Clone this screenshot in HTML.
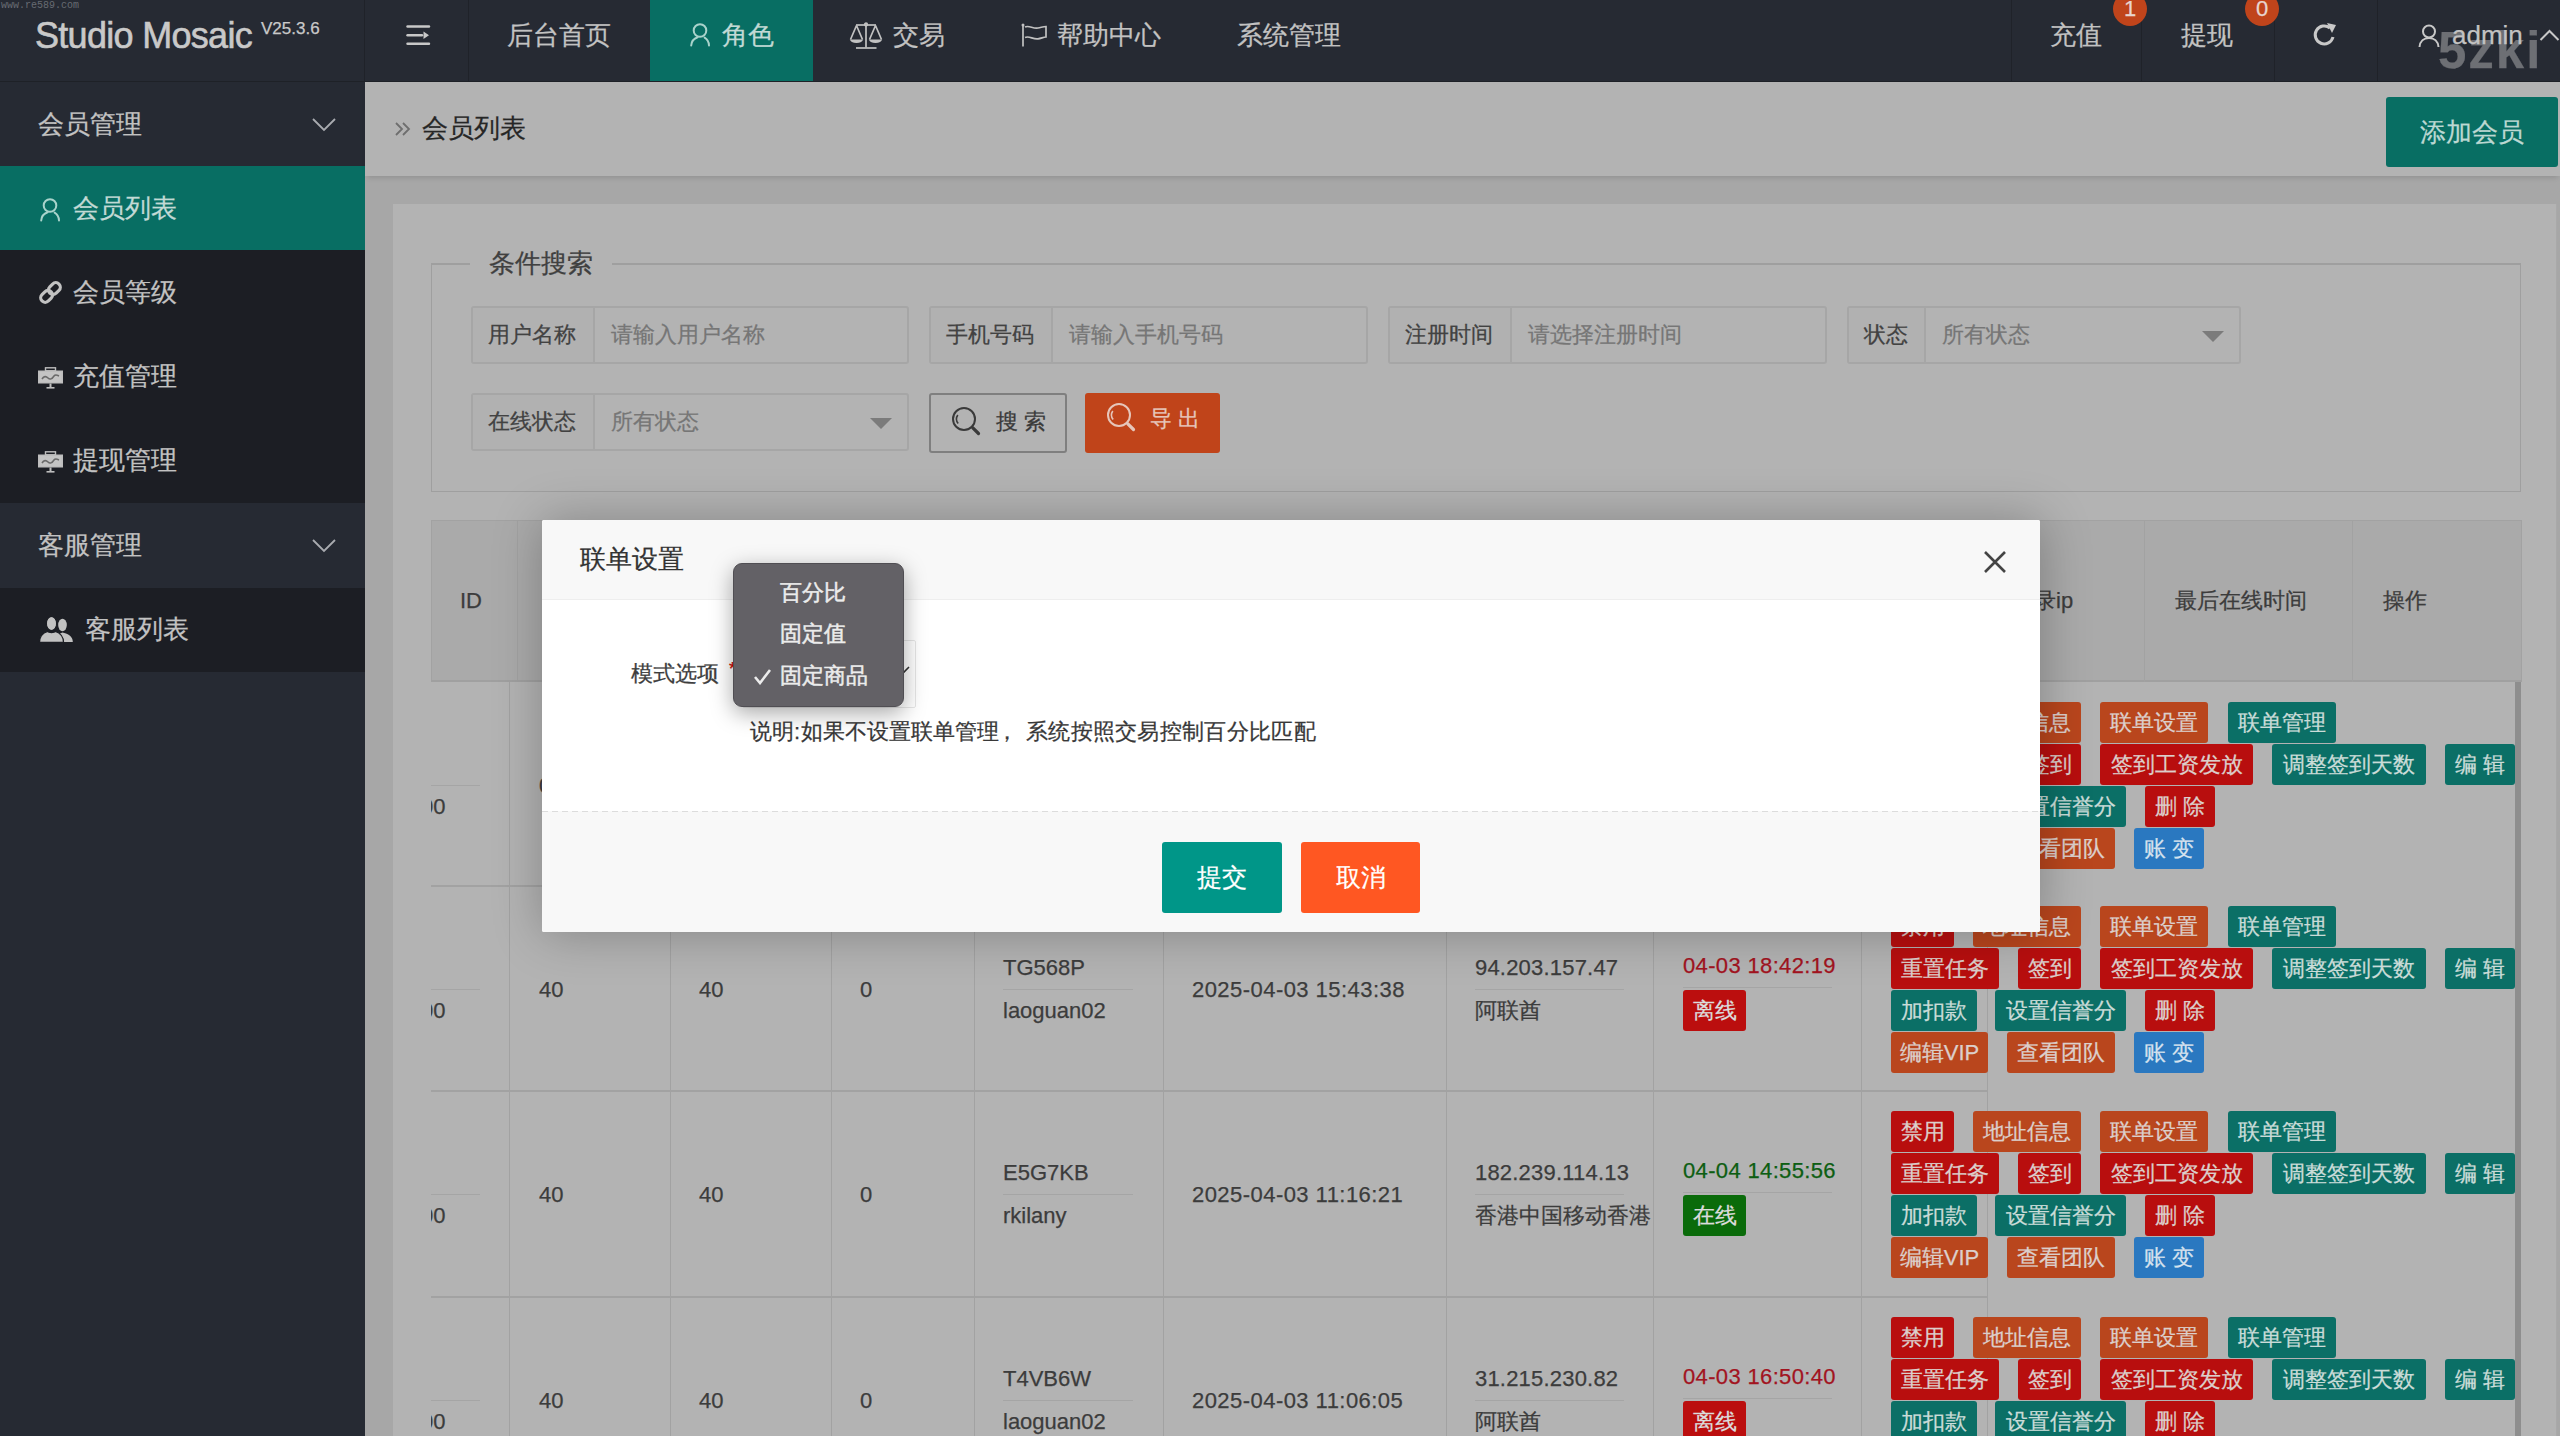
<!DOCTYPE html>
<html><head><meta charset="utf-8">
<style>
*{margin:0;padding:0;box-sizing:border-box}
html,body{width:2560px;height:1436px;overflow:hidden;background:#a7a7a7;font-family:"Liberation Sans",sans-serif;color:#242424}
.a{position:absolute}
.t{position:absolute;white-space:nowrap;line-height:1;-webkit-text-stroke:.25px currentColor}
.btn,.ig .lb,.ig .ph,.badge{-webkit-text-stroke:.25px currentColor}
#hdr{left:0;top:0;width:2560px;height:82px;background:#262a33}
#side{left:0;top:82px;width:365px;height:1354px;background:#262a33}
.nav{color:#c2c2c2;font-size:26px}
.vsep{position:absolute;top:0;width:1px;height:82px;background:#1f2229}
.badge{position:absolute;width:34px;height:34px;border-radius:50%;background:#c0441b;color:#e8d5cf;font-size:22px;text-align:center;line-height:34px}
.sb{color:#c2c2c2;font-size:26px}
.grp{position:absolute;left:0;width:365px;height:84px;background:#262a33}
.sub{position:absolute;left:0;width:365px;background:#1c1e24}
.ig{position:absolute;height:58px;border:2px solid #a6a6a6;border-radius:3px;background:#b3b3b3}
.ig .lb{position:absolute;left:0;top:0;bottom:0;border-right:2px solid #a6a6a6;background:#b1b1b1;font-size:22px;color:#424242;line-height:54px;padding-left:15px}
.ig .ph{position:absolute;top:0;bottom:0;font-size:22px;color:#767676;line-height:54px}
.tri{position:absolute;width:0;height:0;border-left:11px solid transparent;border-right:11px solid transparent;border-top:11px solid #7b7b7b}
.vl{position:absolute;width:1px;background:#a2a2a2}
.hl{position:absolute;height:2px;background:#a2a2a2}
.cell{font-size:22px;color:#3c3c3c}
.btn{position:absolute;height:41px;border-radius:3px;color:#dccfcb;font-size:22px;line-height:41px;text-align:center;white-space:nowrap}
.r{background:#b80e0e}
.o{background:#b9461d}
.g{background:#0b6f66;color:#cadcd8}
.bl{background:#2a78c0;color:#d6e2ee}
</style></head><body>

<!-- HEADER -->
<div id="hdr" class="a">
  <div class="t" style="left:1px;top:1px;font-family:'Liberation Mono',monospace;font-size:10px;color:#666a72;-webkit-text-stroke:0">www.re589.com</div>
  <div class="t" style="left:35px;top:18px;font-size:36px;color:#c9c9c9;letter-spacing:-.7px;-webkit-text-stroke:.6px #c9c9c9">Studio Mosaic</div>
  <div class="t" style="left:261px;top:20px;font-size:17px;color:#c9c9c9">V25.3.6</div>
  <div class="vsep" style="left:364px"></div>
  <div class="vsep" style="left:468px"></div>
  <!-- menu icon -->
  <svg class="a" style="left:405px;top:25px" width="26" height="22" viewBox="0 0 26 22"><g stroke="#c8c8c8" stroke-width="2.4" stroke-linecap="round"><path d="M2.5 1.5 H24"/><path d="M2.5 10.2 H17"/><path d="M2.5 18.8 H24"/></g><path d="M18.5 6.5 L24 10.2 L18.5 14Z" fill="#c8c8c8"/></svg>
  <div class="t nav" style="left:507px;top:22px">后台首页</div>
  <div class="a" style="left:650px;top:0;width:163px;height:82px;background:#086e63"></div>
  <svg class="a" style="left:689px;top:23px" width="22" height="24" viewBox="0 0 22 24"><g fill="none" stroke="#a9d3cb" stroke-width="2" stroke-linecap="round"><circle cx="11" cy="7.5" r="6.3"/><path d="M2.2 22.5 A9.5 9.5 0 0 1 8.6 14.2"/><path d="M15.6 14.6 A9.5 9.5 0 0 1 20 22.5"/></g></svg>
  <div class="t nav" style="left:722px;top:22px;color:#c2dad5">角色</div>
  <!-- scale icon -->
  <svg class="a" style="left:849px;top:22px" width="34" height="28" viewBox="0 0 34 28"><g fill="none" stroke="#c2c2c2" stroke-width="1.7"><path d="M17 3 V25.5"/><path d="M7 26 H27.5"/><path d="M7 3 H27"/><circle cx="17" cy="2.5" r="1.3"/><path d="M7.5 3.5 L1.5 17.5 M7.5 3.5 L13.5 17.5"/><path d="M26.5 3.5 L20.5 17.5 M26.5 3.5 L32.5 17.5"/></g><g fill="#c2c2c2"><path d="M1 17.5 H14 A6.5 3.5 0 0 1 1 17.5Z"/><path d="M20 17.5 H33 A6.5 3.5 0 0 1 20 17.5Z"/></g></svg>
  <div class="t nav" style="left:893px;top:22px">交易</div>
  <!-- flag icon -->
  <svg class="a" style="left:1020px;top:23px" width="28" height="25" viewBox="0 0 28 25"><g fill="none" stroke="#c2c2c2" stroke-width="1.7"><path d="M3 2 V23.5"/><path d="M5 4 C9 2 13 6 18 5 C21 4.5 23.5 3.5 26 3.5 V14 C23.5 14 21 15.5 18 15.8 C13 16.5 9 12.5 5 14.5"/></g><circle cx="3" cy="2" r="1.5" fill="#c2c2c2"/></svg>
  <div class="t nav" style="left:1057px;top:22px">帮助中心</div>
  <div class="t nav" style="left:1237px;top:22px">系统管理</div>

  <div class="vsep" style="left:2011px"></div>
  <div class="vsep" style="left:2141px"></div>
  <div class="vsep" style="left:2274px"></div>
  <div class="vsep" style="left:2377px"></div>
  <div class="t nav" style="left:2050px;top:22px">充值</div>
  <div class="badge" style="left:2113px;top:-8px">1</div>
  <div class="t nav" style="left:2181px;top:22px">提现</div>
  <div class="badge" style="left:2245px;top:-8px">0</div>
  <svg class="a" style="left:2312px;top:23px" width="26" height="24" viewBox="0 0 26 24"><g fill="none" stroke="#c8c8c8" stroke-width="3"><path d="M21 14 A9 9 0 1 1 18 5"/></g><path d="M15 0 L24 2 L20 10Z" fill="#c8c8c8"/></svg>
  <svg class="a" style="left:2418px;top:24px" width="22" height="24" viewBox="0 0 22 24"><g fill="none" stroke="#c8c8c8" stroke-width="2"><circle cx="11" cy="7.5" r="6"/><path d="M1.5 23 C2 17 6 14 11 14 C16 14 20 17 20.5 23"/></g></svg>
  <div class="t" style="left:2438px;top:25px;font-size:51px;font-weight:bold;color:#6d6f74;letter-spacing:2px">5zki</div>
  <div class="t nav" style="left:2452px;top:22px">admin</div>
  
  <svg class="a" style="left:2539px;top:28px" width="21" height="14" viewBox="0 0 20 14"><path d="M1 12 L10 3 L19 12" fill="none" stroke="#c8c8c8" stroke-width="2"/></svg>
</div>

<div class="a" style="left:0;top:81px;width:2560px;height:1px;background:#1e2127;z-index:2"></div>
<!-- SIDEBAR -->
<div id="side" class="a">
  <div class="grp" style="top:0"></div>
  <div class="t sb" style="left:38px;top:29px">会员管理</div>
  <svg class="a" style="left:312px;top:36px" width="24" height="14" viewBox="0 0 24 14"><path d="M1 1 L12 12 L23 1" fill="none" stroke="#a9abb0" stroke-width="1.8"/></svg>
  <div class="a" style="left:0;top:84px;width:365px;height:84px;background:#086e63"></div>
  <svg class="a" style="left:39px;top:116px" width="22" height="24" viewBox="0 0 22 24"><g fill="none" stroke="#a9d3cb" stroke-width="2" stroke-linecap="round"><circle cx="11" cy="7.5" r="6.3"/><path d="M2.2 22.5 A9.5 9.5 0 0 1 8.6 14.2"/><path d="M15.6 14.6 A9.5 9.5 0 0 1 20 22.5"/></g></svg>
  <div class="t sb" style="left:73px;top:113px;color:#c2dad5">会员列表</div>
  <div class="sub" style="top:168px;height:253px"></div>
  <svg class="a" style="left:37px;top:197px" width="27" height="27" viewBox="0 0 27 27"><g transform="rotate(-45 13.5 13.5)" fill="none" stroke="#c2c2c2" stroke-width="3.2"><rect x="1.5" y="9" width="13" height="9" rx="4.5"/><rect x="12.5" y="9" width="13" height="9" rx="4.5"/></g></svg>
  <div class="t sb" style="left:73px;top:197px">会员等级</div>
  <svg class="a" style="left:38px;top:285px" width="25" height="22" viewBox="0 0 25 22"><rect x="7.5" y="0.8" width="10" height="3" fill="none" stroke="#bdbdbd" stroke-width="1.4"/><rect x="0" y="3.5" width="25" height="13" fill="#bdbdbd"/><rect x="1.5" y="5" width="22" height="10" fill="#c4c4c4"/><path d="M4 12 C6 9 8 9 10 11 C12 13 14 12 16 9 C17.5 7 19 8 21 9" fill="none" stroke="#6a6a6a" stroke-width="1.6"/><rect x="11.5" y="16.5" width="2" height="4" fill="#bdbdbd"/><rect x="8.5" y="20" width="8" height="1.6" fill="#bdbdbd"/></svg>
  <div class="t sb" style="left:73px;top:281px">充值管理</div>
  <svg class="a" style="left:38px;top:369px" width="25" height="22" viewBox="0 0 25 22"><rect x="7.5" y="0.8" width="10" height="3" fill="none" stroke="#bdbdbd" stroke-width="1.4"/><rect x="0" y="3.5" width="25" height="13" fill="#bdbdbd"/><rect x="1.5" y="5" width="22" height="10" fill="#c4c4c4"/><path d="M4 12 C6 9 8 9 10 11 C12 13 14 12 16 9 C17.5 7 19 8 21 9" fill="none" stroke="#6a6a6a" stroke-width="1.6"/><rect x="11.5" y="16.5" width="2" height="4" fill="#bdbdbd"/><rect x="8.5" y="20" width="8" height="1.6" fill="#bdbdbd"/></svg>
  <div class="t sb" style="left:73px;top:365px">提现管理</div>
  <div class="grp" style="top:421px;height:85px"></div>
  <div class="t sb" style="left:38px;top:450px">客服管理</div>
  <svg class="a" style="left:312px;top:457px" width="24" height="14" viewBox="0 0 24 14"><path d="M1 1 L12 12 L23 1" fill="none" stroke="#a9abb0" stroke-width="1.8"/></svg>
  <div class="sub" style="top:506px;height:84px"></div>
  <svg class="a" style="left:38px;top:535px" width="36" height="26" viewBox="0 0 36 26"><g fill="#c2c2c2"><ellipse cx="24.5" cy="8" rx="4.3" ry="6.2"/><path d="M19 25 C19 19 21 16.5 24.5 15.5 C29 16.5 34.8 18.5 34.8 25Z"/></g><g fill="#c2c2c2" stroke="#1c1e24" stroke-width="1.3"><ellipse cx="13.5" cy="6.5" rx="5" ry="6.8"/><path d="M1.5 25.5 C1.5 19 5 16 9.5 14.5 C11 15.8 16 15.8 17.5 14.5 C22 16 25.5 19 25.5 25.5Z"/></g><ellipse cx="13.5" cy="6.5" rx="4.4" ry="6.2" fill="#c2c2c2"/></svg>
  <div class="t sb" style="left:85px;top:534px">客服列表</div>
</div>

<!-- CONTENT -->
<div class="a" style="left:365px;top:82px;width:2195px;height:94px;background:#b3b3b3;box-shadow:0 4px 5px -2px rgba(0,0,0,.12)"></div>
<svg class="a" style="left:394px;top:121px" width="17" height="16" viewBox="0 0 17 16"><g fill="none" stroke="#6e6e6e" stroke-width="1.8"><path d="M2 2 L8 8 L2 14"/><path d="M9 2 L15 8 L9 14"/></g></svg>
<div class="t" style="left:422px;top:115px;font-size:26px;color:#262626">会员列表</div>
<div class="btn" style="left:2386px;top:97px;width:172px;height:70px;line-height:70px;background:#086e63;color:#bcd8d2;font-size:26px;border-radius:3px">添加会员</div>

<!-- card -->
<div class="a" style="left:393px;top:204px;width:2164px;height:1232px;background:#b3b3b3;border-right:1px solid #a9a9a9"></div>
<!-- fieldset -->
<div class="a" style="left:431px;top:263px;width:2090px;height:229px;border:1px solid #9f9f9f;border-top-width:2px"></div>
<div class="a" style="left:470px;top:258px;width:142px;height:12px;background:#b3b3b3"></div>
<div class="t" style="left:489px;top:250px;font-size:26px;color:#404040">条件搜索</div>

<div class="ig" style="left:471px;top:306px;width:438px"><div class="lb" style="width:122px">用户名称</div><div class="ph" style="left:138px">请输入用户名称</div></div>
<div class="ig" style="left:929px;top:306px;width:439px"><div class="lb" style="width:122px">手机号码</div><div class="ph" style="left:138px">请输入手机号码</div></div>
<div class="ig" style="left:1388px;top:306px;width:439px"><div class="lb" style="width:122px">注册时间</div><div class="ph" style="left:138px">请选择注册时间</div></div>
<div class="ig" style="left:1847px;top:306px;width:394px"><div class="lb" style="width:77px">状态</div><div class="ph" style="left:93px">所有状态</div><div class="tri" style="left:353px;top:23px"></div></div>
<div class="ig" style="left:471px;top:393px;width:438px"><div class="lb" style="width:122px">在线状态</div><div class="ph" style="left:138px">所有状态</div><div class="tri" style="left:397px;top:23px"></div></div>

<div class="a" style="left:929px;top:393px;width:138px;height:60px;border:2px solid #7f7f7f;border-radius:3px;background:#b3b3b3"></div>
<svg class="a" style="left:951px;top:406px" width="32" height="32" viewBox="0 0 32 32"><g fill="none" stroke="#3a3a3a" stroke-width="2"><circle cx="13" cy="13" r="11"/><path d="M6.8 9 A7 7 0 0 0 7.2 17.5" stroke-width="1.6"/><path d="M21.8 21.8 L27.5 27.5" stroke-width="3.2" stroke-linecap="round"/></g></svg>
<div class="t" style="left:996px;top:411px;font-size:22px;color:#3a3a3a;letter-spacing:6px">搜索</div>
<div class="a" style="left:1085px;top:393px;width:135px;height:60px;border-radius:3px;background:#c0441a"></div>
<svg class="a" style="left:1106px;top:402px" width="32" height="32" viewBox="0 0 32 32"><g fill="none" stroke="#e6c6ba" stroke-width="2"><circle cx="13" cy="13" r="11"/><path d="M6.8 9 A7 7 0 0 0 7.2 17.5" stroke-width="1.6"/><path d="M21.8 21.8 L27.5 27.5" stroke-width="3.2" stroke-linecap="round"/></g></svg>
<div class="t" style="left:1150px;top:408px;font-size:22px;color:#e6c6ba;letter-spacing:6px">导出</div>

<!-- TABLE -->
<div class="a" style="left:431px;top:520px;width:2091px;height:162px;background:#aaaaaa;border:1px solid #a2a2a2"></div>
<div class="vl" style="left:517px;top:520px;height:162px"></div>
<div class="a" style="left:431px;top:680px;width:2091px;height:2px;background:#a0a0a0"></div>
<div class="vl" style="left:2144px;top:520px;height:162px"></div>
<div class="vl" style="left:2352px;top:520px;height:162px"></div>
<div class="t cell" style="left:460px;top:590px">ID</div>
<div class="t cell" style="left:2012px;top:590px">登录ip</div>
<div class="t cell" style="left:2175px;top:590px">最后在线时间</div>
<div class="t cell" style="left:2383px;top:590px">操作</div>

<div class="vl" style="left:509px;top:682px;height:754px"></div>
<div class="vl" style="left:670px;top:682px;height:754px"></div>
<div class="vl" style="left:831px;top:682px;height:754px"></div>
<div class="vl" style="left:974px;top:682px;height:754px"></div>
<div class="vl" style="left:1163px;top:682px;height:754px"></div>
<div class="vl" style="left:1446px;top:682px;height:754px"></div>
<div class="vl" style="left:1653px;top:682px;height:754px"></div>
<div class="vl" style="left:1861px;top:682px;height:754px"></div>
<div class="vl" style="left:1987px;top:682px;height:754px"></div>
<div class="a" style="left:2515px;top:682px;width:6px;height:754px;background:#8e8e8e"></div>

<div class="a" style="left:431px;top:785px;width:49px;height:1px;background:#a5a5a5"></div>
<div class="a" style="left:431px;top:796px;width:30px;height:26px;overflow:hidden"><div class="t cell" style="left:-10px;top:0">00</div></div>
<div class="t cell" style="left:539px;top:775px">0</div>
<div class="t cell" style="left:699px;top:775px">0</div>
<div class="t cell" style="left:860px;top:775px">0</div>
<div class="btn r" style="left:1891px;top:702px;width:63px">禁用</div>
<div class="btn o" style="left:1973px;top:702px;width:108px">地址信息</div>
<div class="btn o" style="left:2100px;top:702px;width:108px">联单设置</div>
<div class="btn g" style="left:2228px;top:702px;width:108px">联单管理</div>
<div class="btn r" style="left:1891px;top:744px;width:108px">重置任务</div>
<div class="btn r" style="left:2018px;top:744px;width:63px">签到</div>
<div class="btn r" style="left:2100px;top:744px;width:153px">签到工资发放</div>
<div class="btn g" style="left:2272px;top:744px;width:154px">调整签到天数</div>
<div class="btn g" style="left:2445px;top:744px;width:70px">编 辑</div>
<div class="btn g" style="left:1891px;top:786px;width:86px">加扣款</div>
<div class="btn g" style="left:1995px;top:786px;width:131px">设置信誉分</div>
<div class="btn r" style="left:2145px;top:786px;width:70px">删 除</div>
<div class="btn o" style="left:1891px;top:828px;width:97px">编辑VIP</div>
<div class="btn o" style="left:2007px;top:828px;width:108px">查看团队</div>
<div class="btn bl" style="left:2134px;top:828px;width:70px">账 变</div>
<div class="hl" style="left:431px;top:885px;width:1556px"></div>
<div class="a" style="left:431px;top:989px;width:49px;height:1px;background:#a5a5a5"></div>
<div class="a" style="left:431px;top:1000px;width:30px;height:26px;overflow:hidden"><div class="t cell" style="left:-10px;top:0">00</div></div>
<div class="t cell" style="left:539px;top:979px">40</div>
<div class="t cell" style="left:699px;top:979px">40</div>
<div class="t cell" style="left:860px;top:979px">0</div>
<div class="t cell" style="left:1003px;top:957px">TG568P</div>
<div class="a" style="left:1003px;top:989px;width:130px;height:1px;background:#a5a5a5"></div>
<div class="t cell" style="left:1003px;top:1000px">laoguan02</div>
<div class="t cell" style="left:1192px;top:979px;letter-spacing:.45px">2025-04-03 15:43:38</div>
<div class="t cell" style="left:1475px;top:957px;letter-spacing:.2px">94.203.157.47</div>
<div class="a" style="left:1475px;top:989px;width:149px;height:1px;background:#a5a5a5"></div>
<div class="t cell" style="left:1475px;top:1000px">阿联酋</div>
<div class="t cell" style="left:1683px;top:955px;color:#a2141f;letter-spacing:.35px">04-03 18:42:19</div>
<div class="a" style="left:1683px;top:987px;width:149px;height:1px;background:#a5a5a5"></div>
<div class="btn" style="left:1683px;top:990px;width:63px;background:#bb0e0e;color:#dcdcdc">离线</div>
<div class="btn r" style="left:1891px;top:906px;width:63px">禁用</div>
<div class="btn o" style="left:1973px;top:906px;width:108px">地址信息</div>
<div class="btn o" style="left:2100px;top:906px;width:108px">联单设置</div>
<div class="btn g" style="left:2228px;top:906px;width:108px">联单管理</div>
<div class="btn r" style="left:1891px;top:948px;width:108px">重置任务</div>
<div class="btn r" style="left:2018px;top:948px;width:63px">签到</div>
<div class="btn r" style="left:2100px;top:948px;width:153px">签到工资发放</div>
<div class="btn g" style="left:2272px;top:948px;width:154px">调整签到天数</div>
<div class="btn g" style="left:2445px;top:948px;width:70px">编 辑</div>
<div class="btn g" style="left:1891px;top:990px;width:86px">加扣款</div>
<div class="btn g" style="left:1995px;top:990px;width:131px">设置信誉分</div>
<div class="btn r" style="left:2145px;top:990px;width:70px">删 除</div>
<div class="btn o" style="left:1891px;top:1032px;width:97px">编辑VIP</div>
<div class="btn o" style="left:2007px;top:1032px;width:108px">查看团队</div>
<div class="btn bl" style="left:2134px;top:1032px;width:70px">账 变</div>
<div class="hl" style="left:431px;top:1090px;width:1556px"></div>
<div class="a" style="left:431px;top:1194px;width:49px;height:1px;background:#a5a5a5"></div>
<div class="a" style="left:431px;top:1205px;width:30px;height:26px;overflow:hidden"><div class="t cell" style="left:-10px;top:0">00</div></div>
<div class="t cell" style="left:539px;top:1184px">40</div>
<div class="t cell" style="left:699px;top:1184px">40</div>
<div class="t cell" style="left:860px;top:1184px">0</div>
<div class="t cell" style="left:1003px;top:1162px">E5G7KB</div>
<div class="a" style="left:1003px;top:1194px;width:130px;height:1px;background:#a5a5a5"></div>
<div class="t cell" style="left:1003px;top:1205px">rkilany</div>
<div class="t cell" style="left:1192px;top:1184px;letter-spacing:.45px">2025-04-03 11:16:21</div>
<div class="t cell" style="left:1475px;top:1162px;letter-spacing:.2px">182.239.114.13</div>
<div class="a" style="left:1475px;top:1194px;width:149px;height:1px;background:#a5a5a5"></div>
<div class="t cell" style="left:1475px;top:1205px">香港中国移动香港</div>
<div class="t cell" style="left:1683px;top:1160px;color:#0d5e12;letter-spacing:.35px">04-04 14:55:56</div>
<div class="a" style="left:1683px;top:1192px;width:149px;height:1px;background:#a5a5a5"></div>
<div class="btn" style="left:1683px;top:1195px;width:63px;background:#0a6b0a;color:#dcdcdc">在线</div>
<div class="btn r" style="left:1891px;top:1111px;width:63px">禁用</div>
<div class="btn o" style="left:1973px;top:1111px;width:108px">地址信息</div>
<div class="btn o" style="left:2100px;top:1111px;width:108px">联单设置</div>
<div class="btn g" style="left:2228px;top:1111px;width:108px">联单管理</div>
<div class="btn r" style="left:1891px;top:1153px;width:108px">重置任务</div>
<div class="btn r" style="left:2018px;top:1153px;width:63px">签到</div>
<div class="btn r" style="left:2100px;top:1153px;width:153px">签到工资发放</div>
<div class="btn g" style="left:2272px;top:1153px;width:154px">调整签到天数</div>
<div class="btn g" style="left:2445px;top:1153px;width:70px">编 辑</div>
<div class="btn g" style="left:1891px;top:1195px;width:86px">加扣款</div>
<div class="btn g" style="left:1995px;top:1195px;width:131px">设置信誉分</div>
<div class="btn r" style="left:2145px;top:1195px;width:70px">删 除</div>
<div class="btn o" style="left:1891px;top:1237px;width:97px">编辑VIP</div>
<div class="btn o" style="left:2007px;top:1237px;width:108px">查看团队</div>
<div class="btn bl" style="left:2134px;top:1237px;width:70px">账 变</div>
<div class="hl" style="left:431px;top:1296px;width:1556px"></div>
<div class="a" style="left:431px;top:1400px;width:49px;height:1px;background:#a5a5a5"></div>
<div class="a" style="left:431px;top:1411px;width:30px;height:26px;overflow:hidden"><div class="t cell" style="left:-10px;top:0">00</div></div>
<div class="t cell" style="left:539px;top:1390px">40</div>
<div class="t cell" style="left:699px;top:1390px">40</div>
<div class="t cell" style="left:860px;top:1390px">0</div>
<div class="t cell" style="left:1003px;top:1368px">T4VB6W</div>
<div class="a" style="left:1003px;top:1400px;width:130px;height:1px;background:#a5a5a5"></div>
<div class="t cell" style="left:1003px;top:1411px">laoguan02</div>
<div class="t cell" style="left:1192px;top:1390px;letter-spacing:.45px">2025-04-03 11:06:05</div>
<div class="t cell" style="left:1475px;top:1368px;letter-spacing:.2px">31.215.230.82</div>
<div class="a" style="left:1475px;top:1400px;width:149px;height:1px;background:#a5a5a5"></div>
<div class="t cell" style="left:1475px;top:1411px">阿联酋</div>
<div class="t cell" style="left:1683px;top:1366px;color:#a2141f;letter-spacing:.35px">04-03 16:50:40</div>
<div class="a" style="left:1683px;top:1398px;width:149px;height:1px;background:#a5a5a5"></div>
<div class="btn" style="left:1683px;top:1401px;width:63px;background:#bb0e0e;color:#dcdcdc">离线</div>
<div class="btn r" style="left:1891px;top:1317px;width:63px">禁用</div>
<div class="btn o" style="left:1973px;top:1317px;width:108px">地址信息</div>
<div class="btn o" style="left:2100px;top:1317px;width:108px">联单设置</div>
<div class="btn g" style="left:2228px;top:1317px;width:108px">联单管理</div>
<div class="btn r" style="left:1891px;top:1359px;width:108px">重置任务</div>
<div class="btn r" style="left:2018px;top:1359px;width:63px">签到</div>
<div class="btn r" style="left:2100px;top:1359px;width:153px">签到工资发放</div>
<div class="btn g" style="left:2272px;top:1359px;width:154px">调整签到天数</div>
<div class="btn g" style="left:2445px;top:1359px;width:70px">编 辑</div>
<div class="btn g" style="left:1891px;top:1401px;width:86px">加扣款</div>
<div class="btn g" style="left:1995px;top:1401px;width:131px">设置信誉分</div>
<div class="btn r" style="left:2145px;top:1401px;width:70px">删 除</div>
<div class="btn o" style="left:1891px;top:1443px;width:97px">编辑VIP</div>
<div class="btn o" style="left:2007px;top:1443px;width:108px">查看团队</div>
<div class="btn bl" style="left:2134px;top:1443px;width:70px">账 变</div>
<!-- MODAL -->

<div class="a" style="left:542px;top:520px;width:1498px;height:412px;background:#fff;border-radius:2px;box-shadow:1px 1px 50px rgba(0,0,0,.27);overflow:hidden">
  <div class="a" style="left:0;top:0;width:1498px;height:80px;background:#f8f8f8;border-bottom:1px solid #eeeeee"></div>
  <div class="t" style="left:38px;top:26px;font-size:26px;color:#333">联单设置</div>
  <svg class="a" style="left:1441px;top:30px" width="24" height="24" viewBox="0 0 24 24"><path d="M2 2 L22 22 M22 2 L2 22" stroke="#444" stroke-width="2.6"/></svg>
  <div class="t" style="left:89px;top:143px;font-size:22px;color:#3d3d3d">模式选项</div>
  <div class="t" style="left:187px;top:140px;font-size:18px;color:#c00">*</div>
  <div class="a" style="left:200px;top:120px;width:174px;height:68px;border:1px solid #e6e6e6;border-radius:2px;background:#fff"></div>
  <svg class="a" style="left:356px;top:146px" width="12" height="8" viewBox="0 0 12 8"><path d="M1 1 L6 6 L11 1" fill="none" stroke="#333" stroke-width="1.6"/></svg>
  <div class="t" style="left:208px;top:201px;font-size:22px;color:#383838">说明<span style="margin-right:1px">:</span>如果不设置联单管理</div><div class="t" style="left:454px;top:201px;font-size:22px;color:#383838">，</div><div class="t" style="left:484px;top:201px;font-size:22px;color:#383838;letter-spacing:.3px">系统按照交易控制百分比匹配</div>
  <div class="a" style="left:0;top:291px;width:1498px;height:121px;background:#f8f8f8"></div><div class="a" style="left:0;top:291px;width:1498px;height:1px;background:repeating-linear-gradient(90deg,#dcdcdc 0 6px,transparent 6px 10px)"></div>
  <div class="btn" style="left:620px;top:322px;width:120px;height:71px;line-height:71px;background:#009688;color:#fff;font-size:25px">提交</div>
  <div class="btn" style="left:759px;top:322px;width:119px;height:71px;line-height:71px;background:#ff5722;color:#fff;font-size:25px">取消</div>
</div>
<div class="a" style="left:733px;top:563px;width:171px;height:144px;background:#636166;border:1px solid #504e53;border-radius:9px;box-shadow:0 6px 22px rgba(0,0,0,.35)"></div>
<div class="t" style="left:780px;top:582px;font-size:22px;color:#ececec;-webkit-text-stroke:.5px #ececec">百分比</div>
<div class="t" style="left:780px;top:623px;font-size:22px;color:#ececec;-webkit-text-stroke:.5px #ececec">固定值</div>
<div class="t" style="left:780px;top:665px;font-size:22px;color:#ececec;-webkit-text-stroke:.5px #ececec">固定商品</div>
<svg class="a" style="left:753px;top:668px" width="19" height="17" viewBox="0 0 19 17"><path d="M2 9 L7 15 L17 2" fill="none" stroke="#ececec" stroke-width="2.6"/></svg>

</body></html>
